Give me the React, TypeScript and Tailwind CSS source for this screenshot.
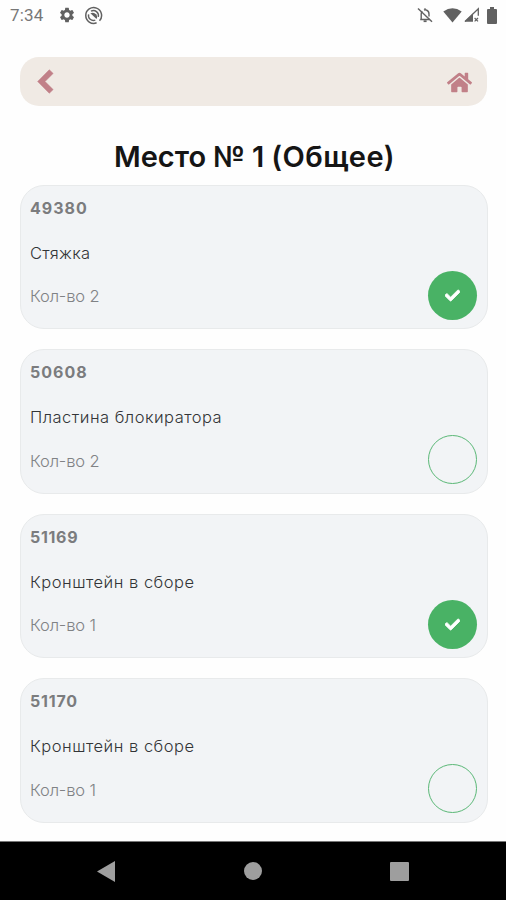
import { FaCheck, FaHome } from "react-icons/fa";
import { MdSettings } from "react-icons/md";

type Item = { code: string; name: string; count: number; done: boolean; codeCls: string; nameCls: string };

const items: Item[] = [
  { code: "49380", name: "Стяжка", count: 2, done: true, codeCls: "tracking-[1px]", nameCls: "tracking-[0.25px]" },
  { code: "50608", name: "Пластина блокиратора", count: 2, done: false, codeCls: "tracking-[1px]", nameCls: "tracking-[0.48px]" },
  { code: "51169", name: "Кронштейн в сборе", count: 1, done: true, codeCls: "tracking-[0.7px]", nameCls: "tracking-[0.5px]" },
  { code: "51170", name: "Кронштейн в сборе", count: 1, done: false, codeCls: "tracking-[0.8px]", nameCls: "tracking-[0.5px]" },
];

function StatusBar() {
  return (
    <div className="flex h-8 items-center justify-between pr-[9px] pb-[2px] pl-[10px] text-[#616161]">
      <div className="flex items-center">
        <span className="w-[48px] font-[Roboto] text-[17px] leading-[30px] tracking-[0.2px] text-[#777]">7:34</span>
        <MdSettings className="size-[18px]" />
        <svg className="ml-[8px] size-[19px]" viewBox="0 0 19 19" fill="none" stroke="currentColor">
          <path d="M15.5 14.8A7.9 7.9 0 1 0 12.6 16.8" strokeWidth="1.5" />
          <path d="M4.6 8.3a5 5 0 0 0 6.7 5.8M7 5.2a5 5 0 0 1 7.3 5.6" strokeWidth="1.4" />
          <path d="M6.4 7.2Q10 5.7 12 8.3t.5 4.7z" fill="currentColor" stroke="none" />
        </svg>
      </div>
      <div className="flex items-center">
        <svg className="size-[18px]" viewBox="0 0 18 18" fill="none" stroke="currentColor">
          <path d="M4.2 13.5h9.5M5.2 13V8q0-1.7 1-2.8M8 4.1Q9 3.5 10.3 4 13 4.8 13 8v2.4M9 2.3v1.5" strokeWidth="1.4" />
          <path d="M7.6 15.2h3" strokeWidth="1.8" />
          <path d="m2 2.4 14 13.4" strokeWidth="1.4" />
        </svg>
        <svg className="ml-[9px] h-[15px] w-[19px]" viewBox="0 0 19 15" fill="currentColor">
          <path d="M.3 3.4Q9.5-3 18.7 3.4L9.5 14.5z" />
        </svg>
        <svg className="ml-[2px] size-[16px]" viewBox="0 0 16 16" fill="none" stroke="currentColor">
          <path d="M1 14.5 14.3 1.7v7.1" strokeWidth="1.3" />
          <path d="M.5 14.8 9 6.6v8.2z" fill="currentColor" stroke="none" />
          <path d="m10.6 11 3.4 3.4m0-3.4-3.4 3.4" strokeWidth="1.2" />
        </svg>
        <svg className="ml-[7px] h-[17px] w-[10px]" viewBox="0 0 10 17" fill="currentColor">
          <path d="M3 0h4v2h2q1 0 1 1v13q0 1-1 1H1q-1 0-1-1V3q0-1 1-1h2z" />
        </svg>
      </div>
    </div>
  );
}

function Card({ item }: { item: Item }) {
  return (
    <section className="flex h-[144.3px] shrink-0 items-end justify-between rounded-[24px] border border-[#e8eaeb] bg-[#f2f4f6] pr-[10px] pb-[8.5px] pl-[9px]">
      <div className="flex h-[134.5px] flex-col pt-[3.5px] whitespace-nowrap">
        <div className={"h-[44px] text-[16px] leading-[38px] font-bold text-[#7b7c7e] " + item.codeCls}>{item.code}</div>
        <div className={"h-[43.7px] text-[16.5px] leading-[40px] font-light text-[#333537] " + item.nameCls}>{item.name}</div>
        <div className="text-[16.5px] leading-[40px] font-light tracking-[-0.15px] text-[#808285]">Кол-во {item.count}</div>
      </div>
      {item.done ? (
        <div className="flex size-[49px] items-center justify-center rounded-full bg-[#49b265] text-white">
          <FaCheck className="size-[15px]" stroke="currentColor" strokeWidth="28" />
        </div>
      ) : (
        <div className="size-[49px] rounded-full border-[1.5px] border-[#5bb877]" />
      )}
    </section>
  );
}

export default function App() {
  return (
    <div className="flex h-[900px] w-[506px] flex-col overflow-hidden bg-[#fefefe] font-[Inter,sans-serif]">
      <StatusBar />
      <header className="mx-5 mt-[25px] flex h-[49px] w-[467px] shrink-0 items-center justify-between rounded-[19px] bg-[#f0eae4] pr-[15px] pl-[17px] text-[#c18088]">
        <svg className="h-[25px] w-[17px]" viewBox="0 0 17 25" fill="currentColor">
          <path d="m.7 12.5 11.6-11.7 3.8 3.6L8 12.5l8.1 8.1-3.8 3.6z" stroke="currentColor" strokeWidth=".6" strokeLinejoin="round" />
        </svg>
        <FaHome className="relative top-[1px] size-[25px]" />
      </header>
      <h1 className="mt-[30px] flex h-[49px] justify-center gap-[7px] pl-[3px] text-[29px] leading-[42px] font-semibold whitespace-nowrap text-[#151515]">
        <span>Место</span>
        <span>№</span>
        <span>1</span>
        <span className="tracking-[0.5px]">(Общее)</span>
      </h1>
      <main className="flex w-[488px] flex-1 flex-col gap-[20.2px] pl-5">
        {items.map((item) => (
          <Card key={item.code} item={item} />
        ))}
      </main>
      <nav className="flex h-[59px] shrink-0 items-center justify-between border-t border-[#777] bg-black pr-[97px] pl-[97px] text-[#9e9e9e]">
        <svg className="h-[21px] w-[18px]" viewBox="0 0 18 21" fill="currentColor"><path d="M0 10.5 18 0v21z" /></svg>
        <div className="size-[18px] rounded-full bg-[#9e9e9e]" />
        <div className="size-[19px] rounded-[1px] bg-[#9e9e9e]" />
      </nav>
    </div>
  );
}
